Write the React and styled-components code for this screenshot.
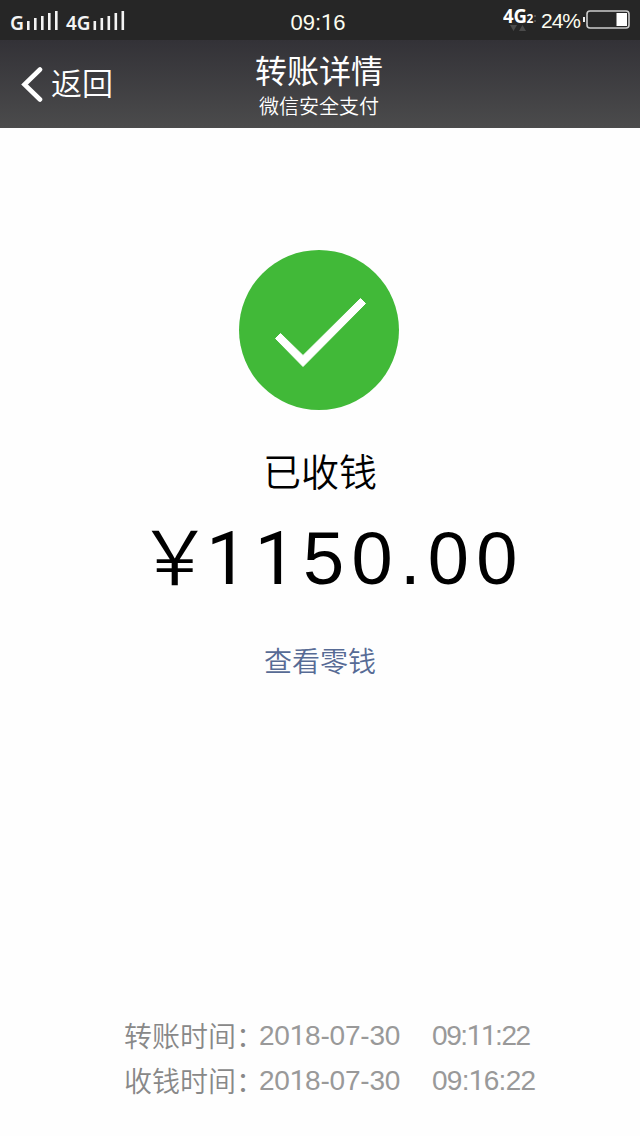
import React from "react";
import styled, { createGlobalStyle } from "styled-components";

const GlobalStyle = createGlobalStyle`
  body {
    margin: 0;
    background: #fefefe;
  }
  * {
    box-sizing: border-box;
  }
`;

const Page = styled.div`
  display: flex;
  flex-direction: column;
  height: 1136px;
  overflow: hidden;
  background: #fefefe;
  font-family: "Liberation Sans", "Noto Sans CJK SC", sans-serif;
  font-weight: 350;
  font-kerning: none;
  white-space: nowrap;
`;

const StatusBar = styled.div`
  display: grid;
  grid-template-columns: 1fr auto 1fr;
  height: 40px;
  padding: 0 9px 0 10px;
  background: #262626;
  color: #fdfdf0;
`;

const Signals = styled.svg`
  width: 120px;
  height: 40px;
  font-family: "Noto Sans", sans-serif;
  font-weight: 600;
`;

const Clock = styled.div`
  font-size: 22px;
  line-height: 45px;
  padding-right: 5px;
`;

const StatusRight = styled.div`
  display: flex;
  justify-content: flex-end;
`;

const Network = styled.svg`
  width: 36px;
  height: 40px;
  font-family: "Noto Sans", sans-serif;
  font-weight: 700;
`;

const Percent = styled.div`
  width: 44px;
  padding-left: 2px;
  font-size: 21px;
  letter-spacing: -1px;
  line-height: 41px;
`;

const Battery = styled.svg`
  width: 48px;
  height: 40px;
`;

const Header = styled.header`
  display: grid;
  grid-template-columns: 1fr auto 1fr;
  height: 88px;
  padding: 0 21px 0 19px;
  background: linear-gradient(#333237, #4b4b4c);
  color: #fff;
`;

const Back = styled.div`
  display: flex;
  font-size: 31px;
  line-height: 90px;
  svg {
    width: 24px;
    height: 88px;
    margin-right: 8px;
  }
`;

const Titles = styled.div`
  text-align: center;
`;

const Title = styled.div`
  height: 50px;
  font-size: 32px;
  font-weight: 400;
  line-height: 64px;
`;

const Subtitle = styled.div`
  font-size: 20px;
  line-height: 34px;
`;

const Main = styled.main`
  flex: 1;
  display: flex;
  flex-direction: column;
  align-items: center;
  padding-top: 122px;
`;

const SuccessMark = styled.svg`
  width: 160px;
  height: 160px;
  margin-right: 2px;
`;

const Status = styled.div`
  margin-top: 39px;
  font-size: 38px;
  line-height: 48px;
  color: #000;
`;

const Amount = styled.div`
  display: flex;
  height: 80px;
  margin-top: 22px;
  padding-left: 31px;
  font-size: 74px;
  line-height: 80px;
  letter-spacing: 7.3px;
  color: #000;
`;

const Yen = styled.span`
  width: 60px;
  font-family: "Noto Sans CJK SC", sans-serif;
  font-size: 75px;
  font-weight: 350;
  font-kerning: auto;
  font-feature-settings: "palt";
  letter-spacing: 0;
  line-height: 68px;
`;

const BalanceLink = styled.a`
  margin-top: 44px;
  font-size: 28px;
  line-height: 40px;
  color: #576b95;
`;

const Times = styled.footer`
  padding: 0 0 33px 124px;
`;

const TimeRow = styled.div`
  display: flex;
  height: 45px;
  font-size: 28px;
  line-height: 45px;
  color: #999;
`;

const Label = styled.span`
  width: 112px;
  line-height: 50px;
  color: #888;
`;

const Colon = styled.span`
  width: 23px;
  line-height: 49px;
  font-feature-settings: "halt";
  color: #888;
`;

const DateText = styled.span`
  width: 173px;
  letter-spacing: -0.2px;
`;

const Time = styled.span`
  letter-spacing: ${(props) => props.$spacing}px;
`;

/* 没有底部横线的数字 1 */
const One = styled.span`
  display: inline-block;
  width: calc(0.556em + ${(props) => props.$gap || 0}px);
  font-family: Roboto, sans-serif;
  font-weight: 400;
  letter-spacing: 0;
`;

const bars = [
  { x: 0, h: 9 },
  { x: 7, h: 12 },
  { x: 14, h: 14 },
  { x: 21, h: 17 },
  { x: 28, h: 19 },
];

const records = [
  { label: "转账时间", date: "2018-07-30", time: "09:11:22", spacing: -1.4 },
  { label: "收钱时间", date: "2018-07-30", time: "09:16:22", spacing: -0.7 },
];

function Digits({ value, gap }) {
  return value
    .split(/(1)/)
    .map((part, i) =>
      part === "1" ? (
        <One key={i} $gap={gap}>
          1
        </One>
      ) : (
        part
      )
    );
}

function Bars({ x }) {
  return bars.map((bar) => (
    <rect key={bar.x} x={x + bar.x} y={30 - bar.h} width="2.6" height={bar.h} />
  ));
}

function App() {
  return (
    <>
      <GlobalStyle />
      <Page>
        <StatusBar>
          <Signals viewBox="0 0 120 40" fill="#f4f4f4">
            <text
              x="0"
              y="29.5"
              fontSize="20"
              textLength="14"
              lengthAdjust="spacingAndGlyphs"
            >
              G
            </text>
            <Bars x={17} />
            <text
              x="56"
              y="29.5"
              fontSize="20"
              textLength="24.5"
              lengthAdjust="spacingAndGlyphs"
            >
              4G
            </text>
            <Bars x={83.5} />
          </Signals>
          <Clock>
            <Digits value="09:16" />
          </Clock>
          <StatusRight>
            <Network viewBox="0 0 36 40" fill="#fff">
              <text
                x="0"
                y="22.5"
                fontSize="19"
                textLength="24"
                lengthAdjust="spacingAndGlyphs"
              >
                4G
              </text>
              <text x="23.5" y="22.5" fontSize="12">
                2
              </text>
              <path d="M31.5 15h1v2h-1zM31.5 20h1v2h-1z" fill="#777" />
              <path d="M7 25h7l-3.5 6zM16 31h7l-3.5-6z" fill="#4b4b4b" />
            </Network>
            <Percent>24%</Percent>
            <Battery viewBox="0 0 48 40">
              <rect x="0" y="17" width="2" height="5" fill="#eee" />
              <rect
                x="4"
                y="11"
                width="42"
                height="17"
                rx="3"
                fill="none"
                stroke="#ccc"
                strokeWidth="1.6"
              />
              <rect x="33.5" y="13" width="10.5" height="13" fill="#fff" />
            </Battery>
          </StatusRight>
        </StatusBar>

        <Header>
          <Back>
            <svg viewBox="0 0 24 88" fill="none" stroke="#fff" strokeWidth="4.6">
              <path d="M21 29.5L5.5 44.5L21 59.5" strokeLinecap="round" />
            </svg>
            返回
          </Back>
          <Titles>
            <Title>转账详情</Title>
            <Subtitle>微信安全支付</Subtitle>
          </Titles>
        </Header>

        <Main>
          <SuccessMark viewBox="0 0 160 160">
            <circle cx="80" cy="80" r="80" fill="#41b938" />
            <path
              d="M41.5 83.5L64 105.5L121.5 48.5L126.5 53.5L64 116.5L36.5 88.5Z"
              fill="#fff"
              stroke="#fff"
              strokeWidth="1"
              strokeLinejoin="round"
            />
          </SuccessMark>
          <Status>已收钱</Status>
          <Amount>
            <Yen>￥</Yen>
            <Digits value="1150.00" gap={7.3} />
          </Amount>
          <BalanceLink>查看零钱</BalanceLink>
        </Main>

        {/* 转账和收钱时间 */}
        <Times>
          {records.map((record) => (
            <TimeRow key={record.label}>
              <Label>{record.label}</Label>
              <Colon>：</Colon>
              <DateText>
                <Digits value={record.date} gap={-0.2} />
              </DateText>
              <Time $spacing={record.spacing}>
                <Digits value={record.time} gap={record.spacing} />
              </Time>
            </TimeRow>
          ))}
        </Times>
      </Page>
    </>
  );
}

export default App;
